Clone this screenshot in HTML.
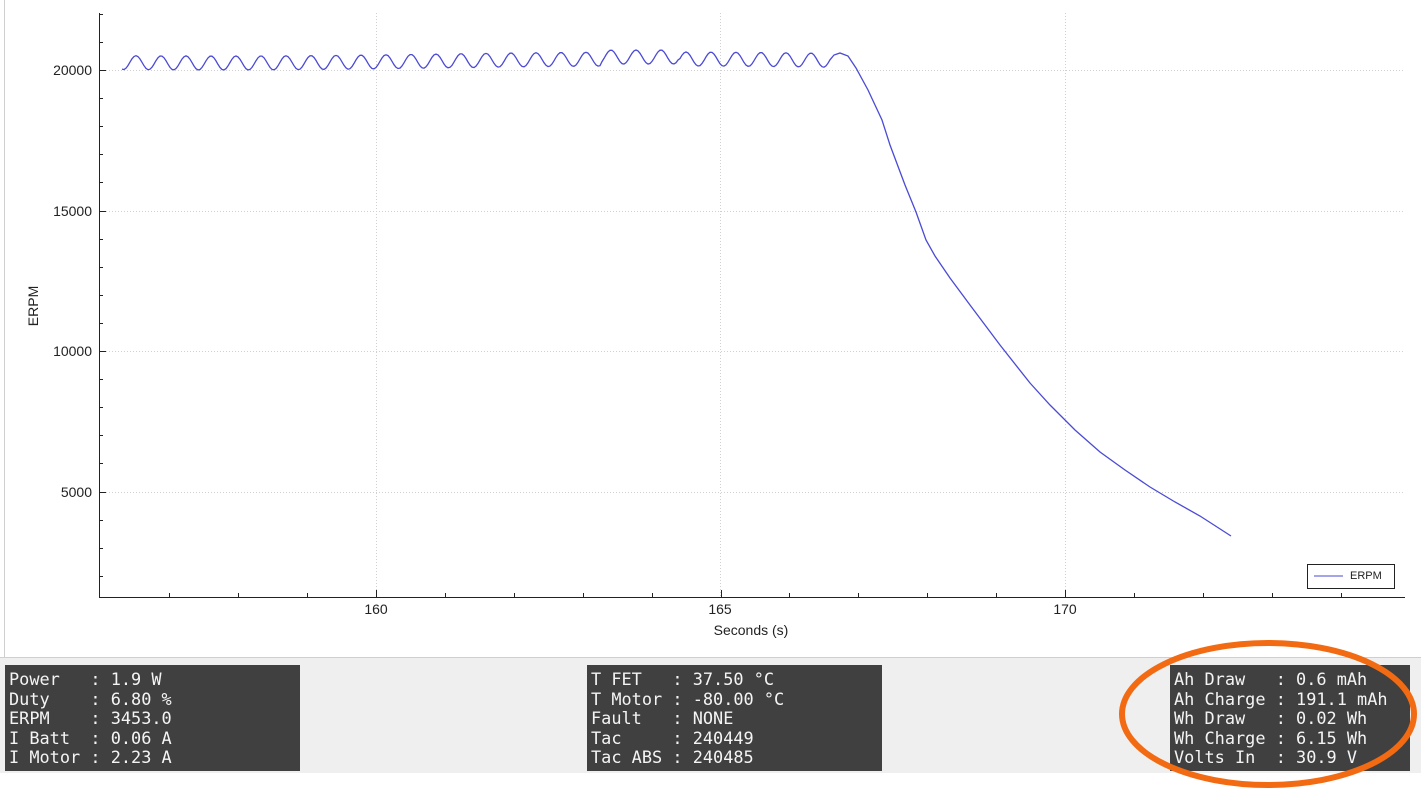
<!DOCTYPE html>
<html><head><meta charset="utf-8"><style>
html,body{margin:0;padding:0;width:1421px;height:794px;overflow:hidden;background:#fff;position:relative;font-family:"Liberation Sans",sans-serif}
#plot{position:absolute;left:0;top:0}
.band{position:absolute;left:0;top:657px;width:1421px;height:115px;background:#efefef;border-top:1px solid #cfcfcf}
.p{position:absolute;top:665px;height:106px;background:#404040;color:#f4f4f4;font-family:"DejaVu Sans Mono","Liberation Mono",monospace;font-size:16.9px;line-height:19.6px;padding:5px 0 0 4px;box-sizing:border-box;white-space:pre}
</style></head><body>
<div class="band"></div>
<svg id="plot" width="1421" height="660" xmlns="http://www.w3.org/2000/svg">
<rect x="0" y="0" width="1421" height="657" fill="#fff"/>
<line x1="4.5" y1="0" x2="4.5" y2="657" stroke="#cfcfcf"/>
<g id="grid" stroke="#d0d0d0" stroke-dasharray="1,2" stroke-width="1"></g>
<g id="ticks" stroke="#222" stroke-width="1"></g>
<line x1="99.5" y1="13" x2="99.5" y2="597" stroke="#222"/>
<line x1="99" y1="597.5" x2="1405" y2="597.5" stroke="#222"/>
<g font-size="14" fill="#222" text-anchor="end">
<text x="92" y="75">20000</text><text x="92" y="216">15000</text><text x="92" y="356">10000</text><text x="92" y="497">5000</text>
</g>
<g font-size="14" fill="#222" text-anchor="middle">
<text x="376" y="614">160</text><text x="720" y="614">165</text><text x="1065" y="614">170</text>
<text x="751" y="635">Seconds (s)</text>
</g>
<text transform="translate(38,306) rotate(-90)" font-size="14" fill="#222" text-anchor="middle">ERPM</text>
<path id="curve" fill="none" stroke="#4a4ad6" stroke-width="1.3"/>
<rect x="1307.5" y="564.5" width="87" height="24" fill="#fff" stroke="#222"/>
<line x1="1314" y1="576" x2="1343" y2="576" stroke="#4a4ad6"/>
<text x="1350" y="579" font-size="11" fill="#222">ERPM</text>
</svg>
<div class="p" style="left:5px;width:295px">Power   : 1.9 W
Duty    : 6.80 %
ERPM    : 3453.0
I Batt  : 0.06 A
I Motor : 2.23 A</div>
<div class="p" style="left:587px;width:295px">T FET   : 37.50 °C
T Motor : -80.00 °C
Fault   : NONE
Tac     : 240449
Tac ABS : 240485</div>
<div class="p" style="left:1170px;width:240px">Ah Draw   : 0.6 mAh
Ah Charge : 191.1 mAh
Wh Draw   : 0.02 Wh
Wh Charge : 6.15 Wh
Volts In  : 30.9 V</div>
<svg style="position:absolute;left:0;top:0" width="1421" height="794"><ellipse cx="1268" cy="714" rx="146" ry="71" fill="none" stroke="#f26a12" stroke-width="6"/></svg>
<script>
var g=document.getElementById('grid'),t=document.getElementById('ticks'),ns='http://www.w3.org/2000/svg';
function L(p,a,b,c,d){var l=document.createElementNS(ns,'line');l.setAttribute('x1',a);l.setAttribute('y1',b);l.setAttribute('x2',c);l.setAttribute('y2',d);p.appendChild(l);}
[70,211,351,492].forEach(function(y){L(g,100,y+.5,1405,y+.5)});
[376,720,1065].forEach(function(x){L(g,x+.5,13,x+.5,597)});
for(var v=2000;v<=22000;v+=1000){var y=70+(20000-v)*140.5/5000;if(y<13)continue;L(t,99,Math.round(y)+.5,v%5000?103:106,Math.round(y)+.5);}
for(var s=157;s<=175;s++){var x=376+(s-160)*68.9;if(x>1405)break;L(t,Math.round(x)+.5,597,Math.round(x)+.5,s%5?593:590);}
var d='';
for(var x=122;x<=830;x+=2){var y=61+7*Math.sin((x-122)/25*2*Math.PI+1.2)+2*Math.sin(x/140)-(x>600&&x<680?2:0);d+=(d?'L':'M')+x+','+y.toFixed(1);}
var pts=[[834,55],[840,53],[848,56],[856,68],[868,90],[882,120],[890,145],[905,185],[916,212],[926,240],[935,256],[950,278],[970,305],[1000,345],[1030,383],[1050,405],[1075,430],[1100,452],[1125,470],[1150,487],[1175,502],[1200,516],[1231,536]];
pts.forEach(function(p){d+='L'+p[0]+','+p[1]});
document.getElementById('curve').setAttribute('d',d);
</script>
</body></html>
